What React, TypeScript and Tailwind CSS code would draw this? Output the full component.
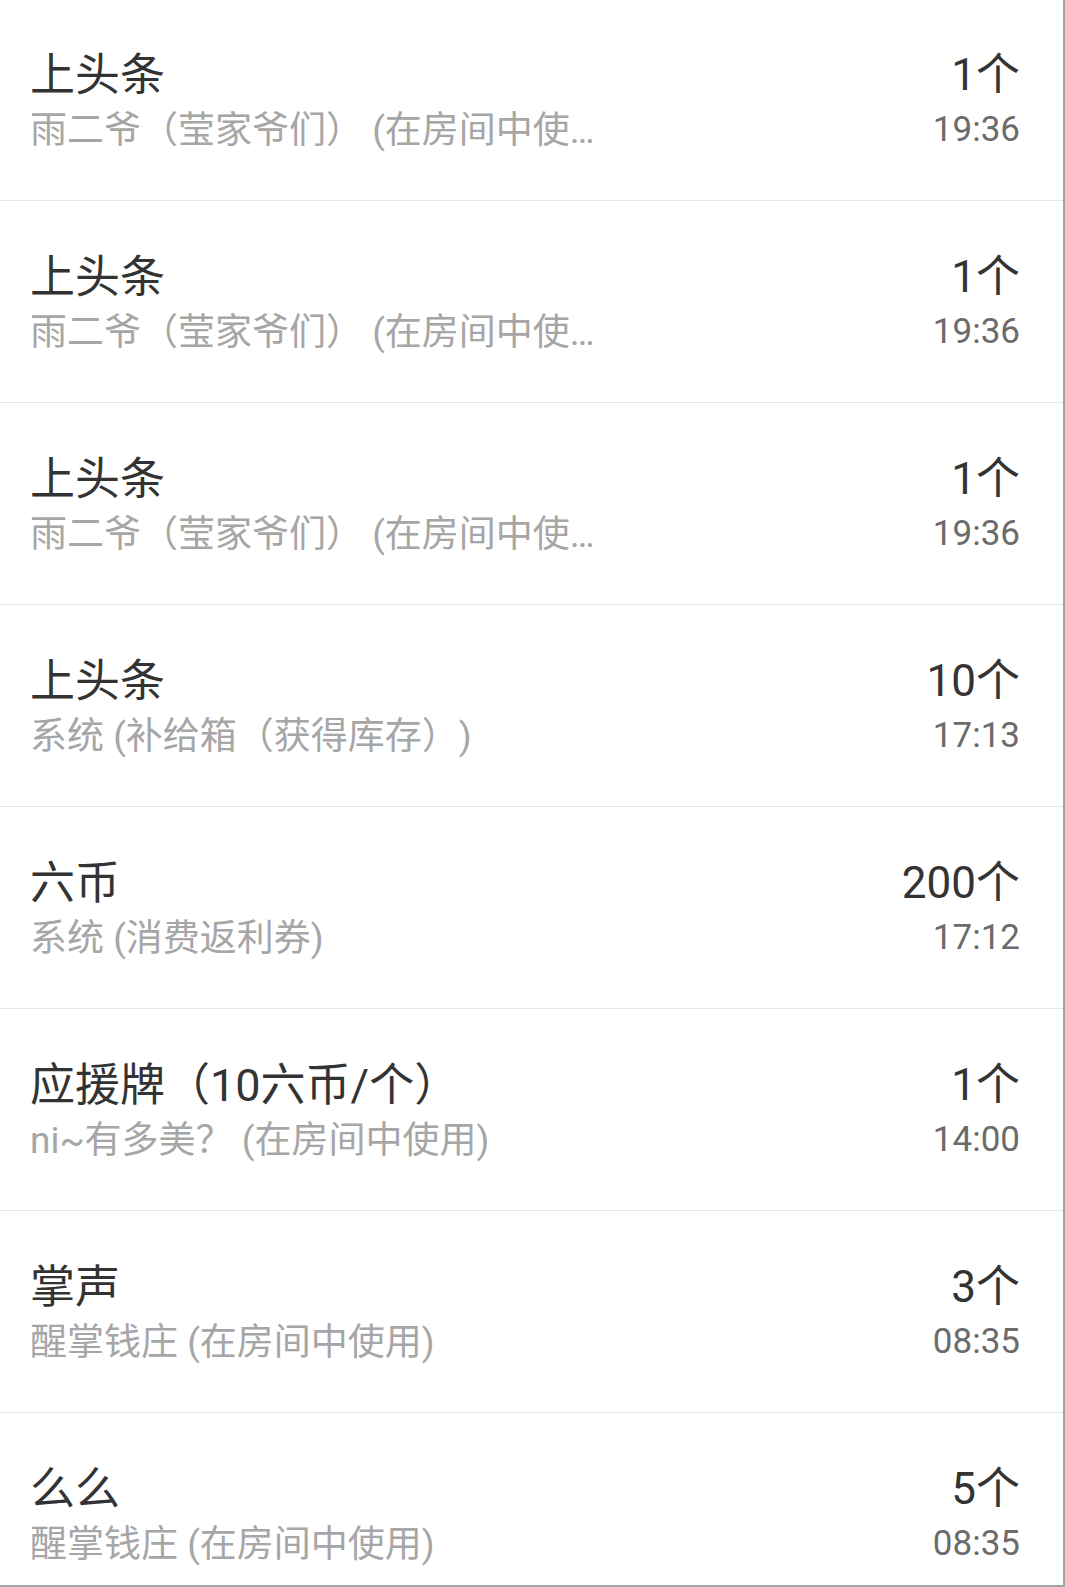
import React from "react";

type Item = { title: string; sub: string; count: string; time: string };

const items: Item[] = [
  { title: "上头条", sub: "雨二爷（莹家爷们） (在房间中使…", count: "1个", time: "19:36" },
  { title: "上头条", sub: "雨二爷（莹家爷们） (在房间中使…", count: "1个", time: "19:36" },
  { title: "上头条", sub: "雨二爷（莹家爷们） (在房间中使…", count: "1个", time: "19:36" },
  { title: "上头条", sub: "系统 (补给箱（获得库存）)", count: "10个", time: "17:13" },
  { title: "六币", sub: "系统 (消费返利券)", count: "200个", time: "17:12" },
  { title: "应援牌（10六币/个）", sub: "ni~有多美？ (在房间中使用)", count: "1个", time: "14:00" },
  { title: "掌声", sub: "醒掌钱庄 (在房间中使用)", count: "3个", time: "08:35" },
  { title: "么么", sub: "醒掌钱庄 (在房间中使用)", count: "5个", time: "08:35" },
];

export default function App() {
  return (
    <div
      className="w-[1065px] h-[1587px] overflow-hidden bg-white border-r-2 border-b-2 border-[#a3a3a3] [text-spacing-trim:space-all]"
      style={{ fontFamily: 'Roboto, "Noto Sans CJK SC", sans-serif' }}
    >
      <div className="-mt-[1px]">
        {items.map((it, i) => (
          <div
            key={i}
            className="h-[202px] border-b border-[#e6e6e6] flex justify-between items-start pl-[30px] pr-[43px] pt-[51px]"
          >
            <div className="flex flex-col">
              <div className="text-[45px] leading-[52px] text-[#333333] whitespace-nowrap">{it.title}</div>
              <div className="mt-[7px] text-[37px] leading-[44px] text-[#a6a6a6] whitespace-nowrap">{it.sub}</div>
            </div>
            <div className="flex flex-col items-end">
              <div className="text-[44px] leading-[50px] text-[#333333] whitespace-nowrap">{it.count}</div>
              <div className="mt-[8px] text-[35px] leading-[44px] text-[#6b6b6b] whitespace-nowrap">{it.time}</div>
            </div>
          </div>
        ))}
      </div>
    </div>
  );
}
